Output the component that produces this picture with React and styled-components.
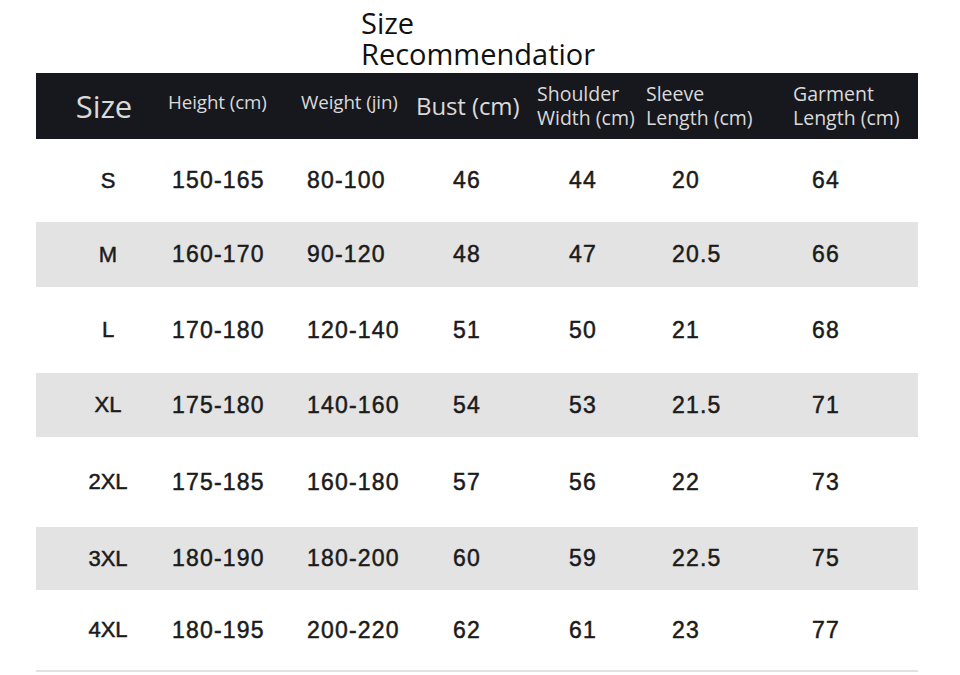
import React from "react";
import styled, { createGlobalStyle } from "styled-components";

const GlobalStyle = createGlobalStyle`
  html, body {
    margin: 0;
    padding: 0;
    background: #fff;
  }
`;

// column widths of the chart, left to right
const COLS = "132px 133px 115px 121px 109px 147px 125px";
// where the numbers sit inside each column
const DATA_PAD = [0, 4, 6, 37, 32, 26, 19];

const rows = [
  { size: "S", h: 83, cells: ["150-165", "80-100", "46", "44", "20", "64"] },
  { size: "M", h: 65, cells: ["160-170", "90-120", "48", "47", "20.5", "66"] },
  { size: "L", h: 86, cells: ["170-180", "120-140", "51", "50", "21", "68"] },
  { size: "XL", h: 64, cells: ["175-180", "140-160", "54", "53", "21.5", "71"] },
  { size: "2XL", h: 90, cells: ["175-185", "160-180", "57", "56", "22", "73"] },
  { size: "3XL", h: 63, cells: ["180-190", "180-200", "60", "59", "22.5", "75"] },
  { size: "4XL", h: 80, cells: ["180-195", "200-220", "62", "61", "23", "77"] },
];

const Page = styled.div`
  width: 960px;
  padding: 0 0 0 36px;
  box-sizing: border-box;
`;

const Title = styled.h1`
  margin: 0;
  padding: 7px 0 0 325px;
  height: 73px;
  box-sizing: border-box;
  font-family: "Open Sans", "Noto Sans", sans-serif;
  font-weight: 400;
  font-size: 29px;
  line-height: 31px;
  color: #111;
`;

const Chart = styled.div`
  width: 882px;
  border-bottom: 2px solid #e2e2e2;
`;

const HeadRow = styled.div`
  display: grid;
  grid-template-columns: ${COLS};
  height: 66px;
  background: #17181d;
  color: #dadada;
  font-family: "Open Sans", "Noto Sans", sans-serif;
`;

const HeadCell = styled.div`
  display: flex;
  align-items: center;
  justify-content: ${(p) => (p.$center ? "center" : "flex-start")};
  padding-left: ${(p) => (p.$center ? "4px" : "0")};
  padding-bottom: ${(p) => p.$lift || 0}px;
  font-size: ${(p) => p.$size}px;
  line-height: 26px;
  letter-spacing: -0.1px;
`;

const StackedHead = styled.div`
  padding-top: 9px;
  font-size: 19.5px;
  line-height: 24px;
  white-space: pre-line;
  letter-spacing: 0;
`;

const Row = styled.div`
  display: grid;
  grid-template-columns: ${COLS};
  height: ${(p) => p.$h}px;
  background: ${(p) => (p.$shade ? "#e3e3e3" : "#fff")};
`;

const Cell = styled.div`
  display: flex;
  align-items: center;
  justify-content: ${(p) => (p.$center ? "center" : "flex-start")};
  padding-left: ${(p) => p.$pad}px;
  font-family: "Liberation Sans", Arial, sans-serif;
  font-size: 23px;
  letter-spacing: 1.2px;
  color: #1b1b1b;
  -webkit-text-stroke: 0.5px #1b1b1b;
`;

const SizeCell = styled(Cell)`
  font-size: 22px;
  padding-left: 12px;
  letter-spacing: 0;
`;

export default function App() {
  return (
    <>
      <GlobalStyle />
      <Page>
        <Title>
          Size
          <br />
          Recommendatior
        </Title>
        <Chart>
          <HeadRow>
            <HeadCell $center $size={31} $lift={-8}>Size</HeadCell>
            <HeadCell $size={18.8} $lift={9}>Height (cm)</HeadCell>
            <HeadCell $size={18.8} $lift={9}>Weight (jin)</HeadCell>
            <HeadCell $size={24} $lift={1}>Bust (cm)</HeadCell>
            <StackedHead>{"Shoulder\nWidth (cm)"}</StackedHead>
            <StackedHead>{"Sleeve\nLength (cm)"}</StackedHead>
            <StackedHead>{"Garment\nLength (cm)"}</StackedHead>
          </HeadRow>
          {rows.map((r, i) => (
            <Row key={r.size} $h={r.h} $shade={i % 2 === 1}>
              <SizeCell $center>{r.size}</SizeCell>
              {r.cells.map((c, j) => (
                <Cell key={j} $pad={DATA_PAD[j + 1]}>
                  {c}
                </Cell>
              ))}
            </Row>
          ))}
        </Chart>
      </Page>
    </>
  );
}
